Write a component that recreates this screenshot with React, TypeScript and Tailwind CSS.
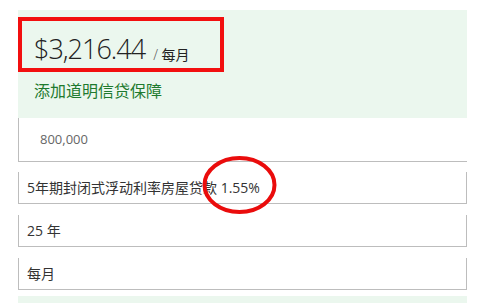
export default function App() {
  const font = { fontFamily: '"Open Sans", "Noto Sans", "Noto Sans CJK SC", sans-serif' };
  return (
    <div className="relative h-[303px] w-[487px] overflow-hidden bg-white text-[#333]" style={font}>
      <div className="ml-[18px] w-[449px] pt-[10px]">
        {/* summary panel */}
        <div className="h-[108px] bg-[#ebf7ee] pt-[7px]">
          <div className="flex h-[55px] w-[206px] items-end border-4 border-[#f20f0f] pb-[6px] pl-[12px]">
            <span className="text-[27px] font-light leading-none tracking-[-1px] text-[#222]">$3,216.44</span>
            <span className="ml-[8px] text-[14px] leading-none text-[#222]">
              <span className="font-light text-[#555]">/</span> 每月
            </span>
          </div>
          <div className="mt-[11px] pl-[16px] text-[16px] leading-none text-[#1e7a2e]">添加道明信贷保障</div>
        </div>

        {/* inputs */}
        <div className="flex h-[44px] items-center border-b border-l border-[#bdbdbd] pl-[21px] text-[13px] text-[#666]">
          800,000
        </div>
        <div className="mt-[10px] flex h-[32px] items-center border-x border-b border-[#bdbdbd] pl-[8px] text-[14px]">
          5年期封闭式浮动利率房屋贷款 1.55%
        </div>
        <div className="mt-[11px] flex h-[32px] items-center border-x border-b border-[#bdbdbd] pl-[8px] text-[14px]">
          25 年
        </div>
        <div className="mt-[11px] flex h-[32px] items-center border-x border-b border-[#bdbdbd] pl-[8px] text-[14px]">
          每月
        </div>
        <div className="mt-[6px] h-[20px] bg-[#ebf7ee]" />
      </div>

      {/* annotation circle */}
      <svg className="absolute left-[200px] top-[154px]" width="80" height="62" viewBox="0 0 80 62" aria-hidden>
        <ellipse cx="39.5" cy="31" rx="35" ry="27" fill="none" stroke="#ea0c0c" strokeWidth="4" />
      </svg>
    </div>
  );
}
